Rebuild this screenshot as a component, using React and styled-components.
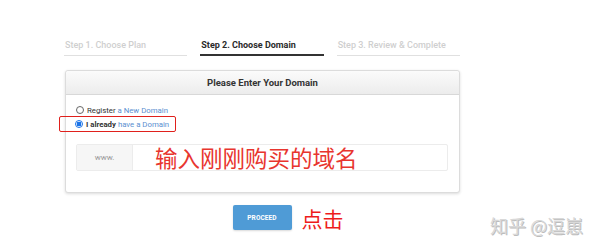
import React from 'react'
import styled, { createGlobalStyle } from 'styled-components'

const Global = createGlobalStyle`
  html, body {
    margin: 0;
    padding: 0;
    background: #fff;
  }
  body {
    width: 600px;
    height: 250px;
    overflow: hidden;
    position: relative;
    font-family: Roboto, "Liberation Sans", sans-serif;
  }
`

const Page = styled.div`
  width: 396px;
  margin-left: 64px;
  padding-top: 39px;
`

const Steps = styled.div`
  display: grid;
  grid-template-columns: repeat(3, 1fr);
  column-gap: 13px;
`

const Step = styled.div`
  font-size: 9px;
  line-height: 12px;
  font-weight: ${p => (p.$active ? 700 : 500)};
  color: ${p => (p.$active ? '#2a2a2a' : '#cfcfcf')};
  padding: 0 0 2px 1px;
  border-bottom: ${p => (p.$active ? '2px solid #333' : '1px solid #e0e0e0')};
  height: ${p => (p.$active ? '13px' : '14px')};
`

const Card = styled.div`
  margin: 14px 0 0 1px;
  border: 1px solid #dcdcdc;
  border-radius: 3px;
  box-shadow: 0 1px 3px rgba(0, 0, 0, 0.14);
  background: #fff;
`

const CardHeader = styled.div`
  height: 23px;
  display: flex;
  align-items: center;
  justify-content: center;
  background: linear-gradient(#fbfbfb, #ececec);
  border-bottom: 1px solid #d8d8d8;
  border-radius: 3px 3px 0 0;
  font-size: 9.5px;
  font-weight: 700;
  color: #333;
`

const CardBody = styled.div`
  padding: 8px 11px 21px 10px;
`

const Option = styled.div`
  display: flex;
  align-items: center;
  gap: 3px;
  height: 14px;
  font-size: 7.8px;
  color: #333;
  font-weight: ${p => (p.$strong ? 700 : 400)};
`

const Marked = styled.div`
  display: flex;
  margin-left: -17px;
  width: 117px;
  height: 16px;
  border: 1.5px solid #e0201c;
  border-radius: 2px;
  box-sizing: border-box;
  padding-left: 15px;
  align-items: center;
  gap: 3px;
`

const Radio = styled.span`
  width: 8px;
  height: 8px;
  border-radius: 50%;
  box-sizing: border-box;
  border: 1px solid ${p => (p.$checked ? '#1a73e8' : '#666')};
  background: ${p => (p.$checked ? 'radial-gradient(circle, #1a73e8 0 2.2px, #fff 2.6px)' : '#fff')};
  flex: none;
`

const Link = styled.span`
  color: #5b8fd0;
  font-weight: 400;
`

const InputGroup = styled.div`
  display: flex;
  height: 27px;
  margin-top: 13px;
  border: 1px solid #ececec;
  border-radius: 2px;
  box-sizing: border-box;
`

const Addon = styled.div`
  width: 55px;
  background: #f6f6f6;
  border-right: 1px solid #ececec;
  display: flex;
  align-items: center;
  justify-content: center;
  font-size: 8px;
  color: #999;
`

const Field = styled.div`
  flex: 1;
  display: flex;
  align-items: center;
  padding-left: 22px;
  font-family: "Noto Sans CJK SC", sans-serif;
  font-size: 22.5px;
  color: #e8352e;
  line-height: 1;
`

const Actions = styled.div`
  display: flex;
  justify-content: center;
  margin-top: 12px;
`

const ButtonWrap = styled.div`
  position: relative;
`

const Button = styled.div`
  width: 59px;
  height: 25px;
  background: #4f9bd6;
  border-radius: 2px;
  box-shadow: 0 1px 2px rgba(0, 0, 0, 0.15);
  display: flex;
  align-items: center;
  justify-content: center;
  color: #fff;
  font-size: 6.5px;
  font-weight: 700;
  letter-spacing: 0.1px;
`

const Note = styled.span`
  position: absolute;
  left: 69px;
  top: 1px;
  font-family: "Noto Sans CJK SC", sans-serif;
  font-size: 21px;
  line-height: 24px;
  color: #ee1c1c;
  white-space: nowrap;
`

const Watermark = styled.div`
  position: absolute;
  right: 17px;
  top: 213px;
  font-family: "Noto Sans CJK SC", sans-serif;
  font-size: 18px;
  line-height: 24px;
  color: #d9d9d9;
  text-shadow: 1px 1px 0 #bdbdbd;
  white-space: nowrap;
`

export default function App() {
  return (
    <>
      <Global />
      <Page>
        <Steps>
          <Step>Step 1. Choose Plan</Step>
          <Step $active>Step 2. Choose Domain</Step>
          <Step>Step 3. Review &amp; Complete</Step>
        </Steps>
        <Card>
          <CardHeader>Please Enter Your Domain</CardHeader>
          <CardBody>
            <Option>
              <Radio />
              <span>
                Register <Link>a New Domain</Link>
              </span>
            </Option>
            <Option $strong>
              <Marked>
                <Radio $checked />
                <span>
                  I already <Link>have a Domain</Link>
                </span>
              </Marked>
            </Option>
            <InputGroup>
              <Addon>www.</Addon>
              <Field>输入刚刚购买的域名</Field>
            </InputGroup>
          </CardBody>
        </Card>
        <Actions>
          <ButtonWrap>
            <Button>PROCEED</Button>
            <Note>点击</Note>
          </ButtonWrap>
        </Actions>
      </Page>
      <Watermark>知乎 @逗崽</Watermark>
    </>
  )
}
